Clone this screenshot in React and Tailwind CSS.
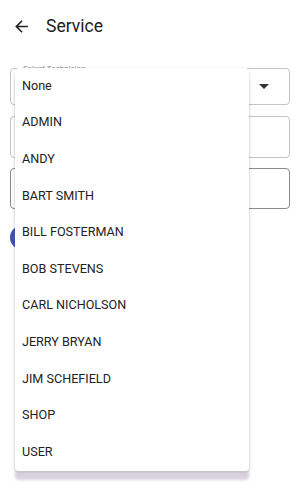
import React from "react";

const items = ["None","ADMIN","ANDY","BART SMITH","BILL FOSTERMAN","BOB STEVENS","CARL NICHOLSON","JERRY BRYAN","JIM SCHEFIELD","SHOP","USER"];

export default function App() {
  return (
    <div className="relative w-[300px] h-[490px] bg-white overflow-hidden" style={{fontFamily: "Roboto, 'Liberation Sans', sans-serif"}}>
      <div className="flex items-center h-[50px] pt-[2px] pl-[12px]">
        <svg width="19" height="19" viewBox="0 0 24 24" className="text-[#212121]">
          <path d="M20 11H7.83l5.59-5.59L12 4l-8 8 8 8 1.41-1.41L7.83 13H20v-2z" fill="currentColor" />
        </svg>
        <span className="ml-[15px] text-[17.5px] text-[#212121]">Service</span>
      </div>
      <div className="flex flex-col px-[10px] pt-[18px]">
        <div className="relative h-[37px] border border-[#c4c4c4] rounded-[4px] flex items-center justify-end pr-[20px]">
          <span className="absolute left-[10px] top-[-5px] bg-white px-[2px] text-[8px] leading-[10px] text-[#888]">Select Technician</span>
          <svg width="10" height="5" viewBox="0 0 10 5"><path d="M0 0h10L5 5z" fill="#333" /></svg>
        </div>
        <div className="mt-[11px] h-[42px] border border-[#c4c4c4] rounded-[4px]" />
        <div className="mt-[10px] h-[41px] border border-[#8a8a8a] rounded-[4px]" />
        <div className="mt-[16px] h-[25px] w-[80px] rounded-full bg-[#3f51b5]" />
      </div>
      <div className="absolute left-[15px] top-[68px] w-[234px] rounded-[4px] bg-white shadow-[0_9px_3px_rgba(140,125,155,0.35),0_1px_3px_rgba(0,0,0,0.15)]">
        {items.map((t) => (
          <div key={t} className="h-[36.6px] flex items-center pl-[7px] text-[12.6px] text-[#222]">{t}</div>
        ))}
      </div>
    </div>
  );
}
